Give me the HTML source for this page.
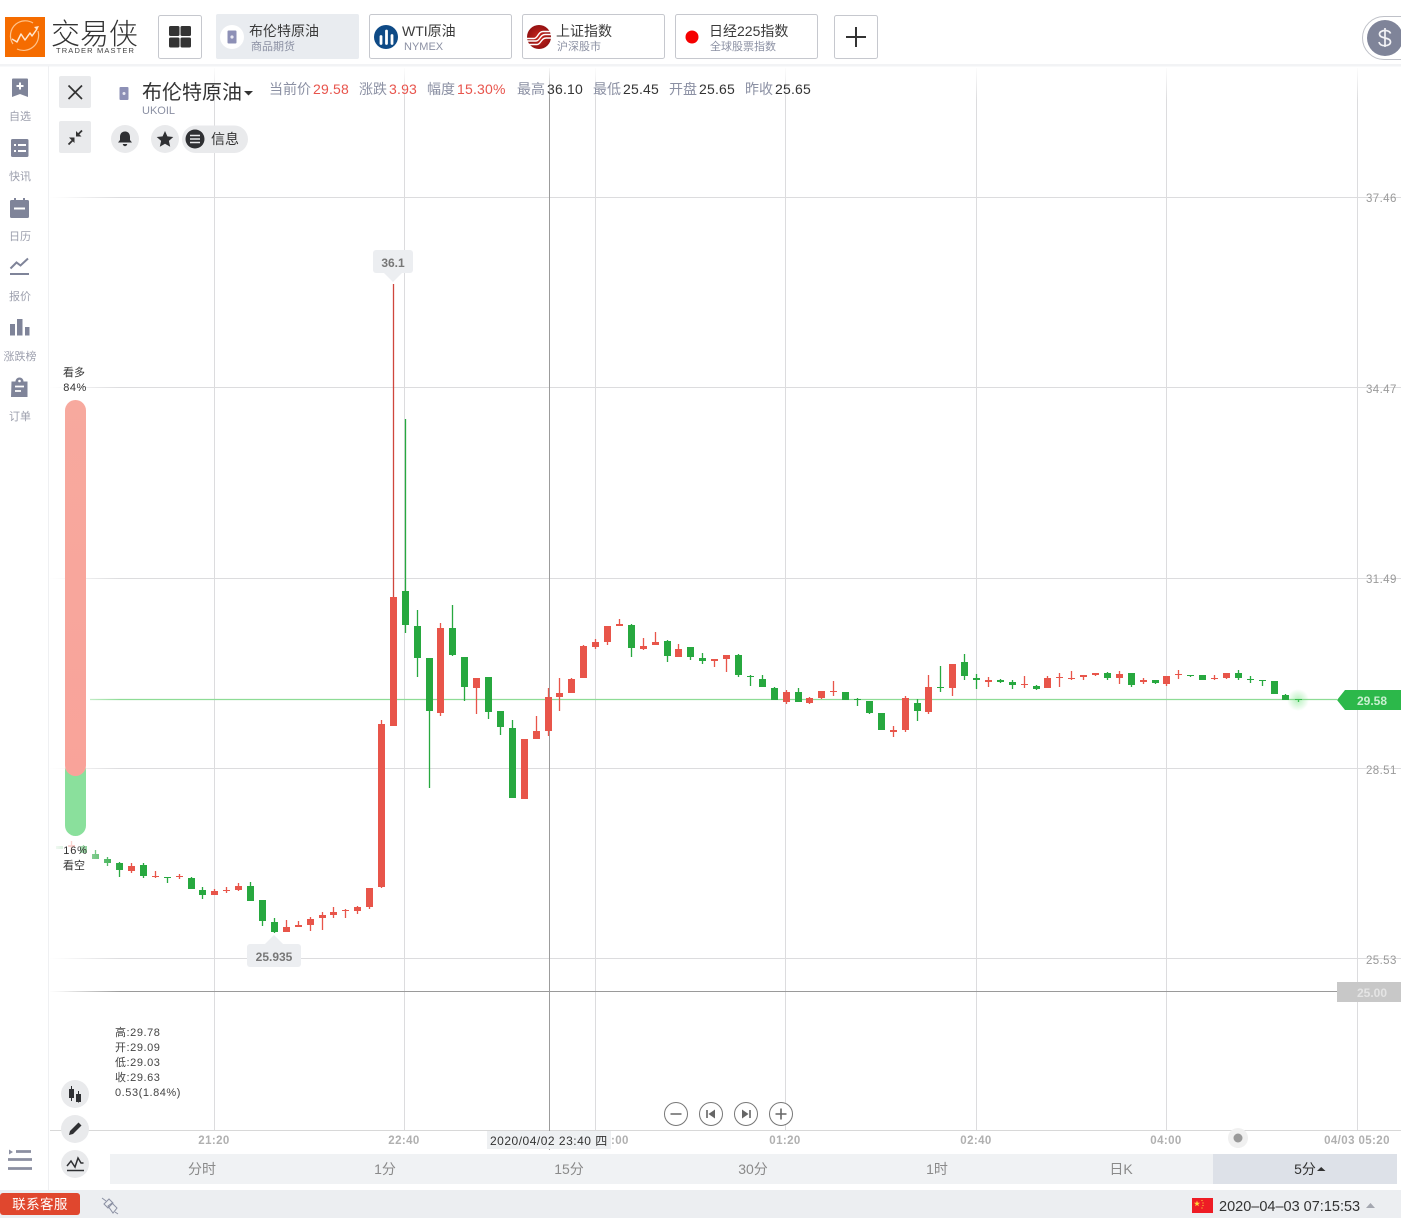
<!DOCTYPE html>
<html lang="zh"><head><meta charset="utf-8"><title>交易侠</title>
<style>
html,body{margin:0;padding:0;background:#fff}
body{width:1401px;height:1218px;position:relative;overflow:hidden;font-family:"Liberation Sans","Noto Sans CJK SC",sans-serif;color:#333}
svg.g{position:absolute;left:0;top:0}
.t{position:absolute;white-space:nowrap;line-height:16px}
.s{font-size:14px;top:81px;color:#8b90a3}
.r{font-size:14px;top:81px;color:#e8544c;letter-spacing:.2px}
.k{font-size:14px;top:81px;color:#333;letter-spacing:.2px}
.tt{font-size:14px;top:23px;color:#3a3a3a}
.st{font-size:11px;top:39px;color:#8b90a3}
.nav{font-size:11px;color:#9c9fad;width:40px;text-align:center;left:0}
.ax{font-size:11.5px;font-weight:bold;color:#b0b0b0;top:1133px;width:80px;text-align:center;letter-spacing:.4px}
.py{font-size:11.5px;color:#9a9a9a;left:1366px;letter-spacing:.4px}
.o{font-size:11px;color:#444;left:115px;letter-spacing:.55px}
.p{font-size:14px;color:#8a8a8a;top:1161px;width:60px;text-align:center}
</style></head><body>
<svg class="g" width="1401" height="1218" viewBox="0 0 1401 1218" xmlns="http://www.w3.org/2000/svg">
<defs>
<linearGradient id="fl" x1="0" x2="1" y1="0" y2="0"><stop offset="0" stop-color="#fff" stop-opacity="1"/><stop offset=".2" stop-color="#fff" stop-opacity=".85"/><stop offset="1" stop-color="#fff" stop-opacity="0"/></linearGradient>
<linearGradient id="ft" x1="0" x2="0" y1="0" y2="1"><stop offset="0" stop-color="#fff" stop-opacity="1"/><stop offset="1" stop-color="#fff" stop-opacity="0"/></linearGradient>
<linearGradient id="sr" x1="0" x2="0" y1="0" y2="1"><stop offset="0" stop-color="#f7a99e"/><stop offset="1" stop-color="#f9a39a"/></linearGradient>
<radialGradient id="gl"><stop offset="0" stop-color="#5fe06f" stop-opacity=".45"/><stop offset="1" stop-color="#5fe06f" stop-opacity="0"/></radialGradient>
<radialGradient id="sh" cx=".5" cy=".5" r=".55"><stop offset="0" stop-color="#c9281e"/><stop offset="1" stop-color="#8f0f10"/></radialGradient>
</defs>

<!-- grid -->
<path d="M50 197.500H1401M50 387.500H1401M50 578.500H1401M50 768.500H1401M50 958.500H1401" stroke="#dcdcde" stroke-width="1" fill="none"/>
<path d="M214.500 68V1130M404.500 68V1130M595.500 68V1130M785.500 68V1130M976.500 68V1130M1166.500 68V1130M1357.500 68V1130" stroke="#dcdcde" stroke-width="1" fill="none"/>
<path d="M50 1130.500H1401" stroke="#d8d8d8" fill="none"/>
<path d="M90 699.500H1337" stroke="#8edc96" stroke-width="1.200" fill="none"/>
<path d="M50 991.500H1337" stroke="#9a9a9a" fill="none"/>
<path d="M549.500 68V1150" stroke="#9c9c9c" fill="none"/>

<!-- candles: wicks -->
<path fill="none" stroke="#e8554a" stroke-width="1.300" d="M71.500 841V851M131.500 863V873M155.500 871V878M179.500 874V879M214.500 889V895M226.500 887V893M238.500 883V891M286.500 920V932M298.500 921V927M310.500 917V931M322.500 912V930M333.500 907V918M345.500 909V918M357.500 906V914M369.500 888V909M381.500 720V888M476.500 678V714M536.500 716V739M548.500 688V736M559.500 678V711M571.500 678V693M583.500 645V678M595.500 639V649M607.500 626V645M619.500 619V626M643.500 638V650M655.500 632V645M678.500 644V657M714.500 659V667M726.500 655V672M786.500 690V704M809.500 697V704M821.500 691V699M833.500 681V696M893.500 726V737M905.500 696V732M928.500 675V714M952.500 664V696M988.500 677V687M1024.500 676V688M1047.500 676V688M1059.500 673V687M1071.500 671V680M1083.500 675V680M1095.500 673V676M1119.500 671V684M1143.500 678V684M1166.500 676V686M1178.500 670V679M1214.500 675V680M1226.500 673V679M440.500 623V716"/>
<path d="M393.500 284V726" stroke="#cf463d" stroke-width="1.300" fill="none"/>
<path fill="none" stroke="#27a83f" stroke-width="1.300" d="M83.500 845V853M95.500 850V859M107.500 857V866M119.500 862V877M143.500 863V878M167.500 877V883M191.500 877V889M202.500 887V899M250.500 882V901M262.500 900V926M274.500 918V933M405.500 419V633M417.500 610V677M429.500 658V788M452.500 605V656M464.500 657V701M488.500 677V719M500.500 711V735M512.500 720V798M631.500 624V657M667.500 640V662M690.500 647V660M702.500 653V664M738.500 654V677M750.500 675V686M762.500 675V687M774.500 687V700M798.500 688V702M845.500 692V700M857.500 698V706M869.500 701V714M881.500 713V730M917.500 699V721M940.500 666V692M964.500 654V680M976.500 674V689M1000.500 679V683M1012.500 680V689M1036.500 685V690M1107.500 672V680M1131.500 673V687M1155.500 680V684M1190.500 675V677M1202.500 675V680M1238.500 670V680M1250.500 676V683M1262.500 680V686M1274.500 681V694M1285.500 694V700M1298.500 699V702"/>
<!-- candles: bodies -->
<path fill="none" stroke="#e8554a" stroke-width="7" d="M71.500 845V847M131.500 866V871M155.500 876V877M179.500 876V877M214.500 891V895M226.500 890V891M238.500 886V890M286.500 927V932M298.500 925V927M310.500 919V925M322.500 915V918M333.500 912V915M345.500 910V911M357.500 907V911M369.500 888V907M381.500 724V887M393.500 597V726M440.500 628V713M476.500 678V688M524.500 739V799M536.500 731V739M548.500 697V731M559.500 693V697M571.500 679V693M583.500 646V678M595.500 642V647M607.500 626V642M619.500 624V626M643.500 646V649M655.500 642V645M678.500 649V657M714.500 659V661M726.500 655V659M786.500 692V702M809.500 698V703M821.500 691V698M833.500 691V692M893.500 730V732M905.500 698V730M928.500 687V712M952.500 664V688M988.500 680V682M1024.500 684V685M1047.500 678V688M1059.500 677V678M1071.500 678V679M1083.500 675V677M1095.500 673V675M1119.500 674V678M1143.500 680V682M1166.500 676V684M1178.500 674V675M1214.500 678V679M1226.500 673V678"/>
<path fill="none" stroke="#27a83f" stroke-width="7" d="M59.500 846V849M83.500 846V853M95.500 854V859M107.500 859V863M119.500 863V870M143.500 865V876M167.500 877V878M191.500 878V889M202.500 890V895M250.500 886V901M262.500 900V921M274.500 922V932M405.500 591V625M417.500 626V658M429.500 658V711M452.500 628V655M464.500 657V687M488.500 677V712M500.500 711V727M512.500 728V798M631.500 625V648M667.500 641V656M690.500 647V657M702.500 658V661M738.500 655V675M750.500 676V677M762.500 679V687M774.500 688V700M798.500 692V702M845.500 692V700M857.500 699V700M869.500 701V713M881.500 713V730M917.500 703V711M940.500 687V688M964.500 662V676M976.500 678V680M1000.500 680V682M1012.500 682V685M1036.500 686V689M1107.500 673V678M1131.500 673V685M1155.500 680V683M1190.500 675V676M1202.500 675V680M1238.500 673V678M1250.500 679V680M1262.500 680V681M1274.500 681V694M1285.500 695V700M1298.500 699V700"/>
<circle cx="1298" cy="700" r="11" fill="url(#gl)"/>

<!-- fades -->
<rect x="49" y="66" width="72" height="1064" fill="url(#fl)"/>
<rect x="49" y="66" width="1352" height="34" fill="url(#ft)"/>

<!-- top bar -->
<rect x="0" y="64" width="1401" height="2.500" fill="#f2f3f5"/>
<rect x="48" y="66" width="1" height="1124" fill="#eff0f2"/>

<!-- logo -->
<rect x="5" y="17" width="40" height="40" fill="#f56c00"/>
<path d="M13 44a15 15 0 0 1 3-20a15 15 0 0 1 17-1" fill="none" stroke="#ffc38c" stroke-width="1.200"/>
<path d="M38 31a15 15 0 0 1-5 16a15 15 0 0 1-16 2" fill="none" stroke="#ffc38c" stroke-width="1.200"/>
<path d="M12 39l5 3l4-8l4 6l5-7l2 3l5-7" fill="none" stroke="#ffe6cf" stroke-width="1.500" stroke-linejoin="round"/>
<path d="M39 26l-5 1l3 3z" fill="#ffe6cf"/>

<!-- header buttons -->
<rect x="158.500" y="15.500" width="43" height="43" rx="2" fill="#fff" stroke="#c6c8ce"/>
<rect x="169" y="26" width="10.500" height="10" rx="1.500" fill="#333"/><rect x="180.500" y="26" width="10.500" height="10" rx="1.500" fill="#333"/>
<rect x="169" y="37.500" width="10.500" height="10" rx="1.500" fill="#333"/><rect x="180.500" y="37.500" width="10.500" height="10" rx="1.500" fill="#333"/>
<rect x="216" y="14" width="143" height="45" rx="2" fill="#e9ecf0"/>
<circle cx="232" cy="37" r="12" fill="#fff"/>
<rect x="227.500" y="30.500" width="9" height="13" rx="1" fill="#8d90b6"/>
<circle cx="232" cy="37" r="1.600" fill="#e8e8f2"/>
<rect x="369.500" y="14.500" width="142" height="44" rx="2" fill="#fff" stroke="#c6c8ce"/>
<circle cx="386" cy="37" r="12" fill="#0e4a86"/>
<path d="M381 36.500v7M386.500 31v12.500M392 35.500v8" stroke="#fff" stroke-width="2.800" stroke-linecap="round" fill="none"/>
<rect x="522.500" y="14.500" width="142" height="44" rx="2" fill="#fff" stroke="#c6c8ce"/>
<circle cx="539" cy="37" r="12" fill="url(#sh)"/>
<path d="M527 38.500h7c4 0 4-7 9-7h7M527 41h9c4 0 4-6.500 9-6.500h6M529 44.500h8c4 0 4-6.500 9-6.500h5" stroke="#fff" stroke-width="1.400" fill="none"/>
<rect x="675.500" y="14.500" width="142" height="44" rx="2" fill="#fff" stroke="#c6c8ce"/>
<circle cx="692" cy="37" r="6.500" fill="#f50000"/>
<rect x="834.500" y="15.500" width="43" height="43" rx="2" fill="#fff" stroke="#c6c8ce"/>
<path d="M846 37h20M856 27v20" stroke="#333" stroke-width="2" fill="none"/>

<!-- $ -->
<path d="M1401 16.500h-17a21.500 21.500 0 0 0 0 43h17" fill="#fff" stroke="#bfc1c8"/>
<circle cx="1385" cy="38" r="18" fill="#7f8499"/>
<path d="M1390.500 33.500c-.5-2-3-3-5.500-3c-3 0-5.500 1.500-5.500 3.500c0 5.500 11 2.500 11 8c0 2.300-2.500 3.700-5.500 3.700c-3 0-5.500-1.200-6-3.700M1385 28v19" fill="none" stroke="#f3f3f6" stroke-width="1.700"/>

<!-- sidebar icons -->
<path d="M12 79.500a1 1 0 0 1 1-1h14a1 1 0 0 1 1 1v17.500l-8-3l-8 3z" fill="#7f8499"/>
<path d="M20 82.500v7M16.500 86h7" stroke="#fff" stroke-width="2" fill="none"/>
<rect x="11" y="139" width="17.500" height="18" rx="1.500" fill="#7f8499"/>
<path d="M14 145h2M18 145h8M14 151h2M18 151h8" stroke="#fff" stroke-width="2" fill="none"/>
<path d="M10 201.500a1.500 1.500 0 0 1 1.500-1.500h2.500v-2h2v2h7v-2h2v2h2.500a1.500 1.500 0 0 1 1.500 1.500v15a1.500 1.500 0 0 1-1.500 1.500h-16a1.500 1.500 0 0 1-1.500-1.500z" fill="#7f8499"/>
<path d="M14 208.500h11" stroke="#fff" stroke-width="2" fill="none"/>
<path d="M10.500 268.500l6-6l4 3l7.500-7" fill="none" stroke="#7f8499" stroke-width="2"/>
<path d="M10 274h19" stroke="#7f8499" stroke-width="2" fill="none"/>
<path d="M10 324h5v11.500h-5zM17 319h5.500v16.500h-5.500zM25 327h4.500v8.500h-4.500z" fill="#7f8499"/>
<path d="M12 381.500h4a4 4 0 0 1 8 0h4v15.500h-16.500z" fill="#7f8499" transform="translate(-.5 0)"/>
<path d="M15 386.500h9M15 391h6" stroke="#fff" stroke-width="1.800" fill="none"/>
<circle cx="19.500" cy="381" r="1.300" fill="#fff"/>
<path d="M16 1151.500h15M8 1159.500h24M8 1168.500h24" stroke="#8b8fa1" stroke-width="2.800" fill="none"/>
<path d="M9 1149.500v5l4-2.500z" fill="#8b8fa1"/>

<!-- close & collapse -->
<rect x="59" y="76" width="32" height="32" rx="2" fill="#e9eaec"/>
<path d="M68.500 85.500l13.500 13.500M82 85.500l-13.500 13.500" stroke="#333" stroke-width="1.700" fill="none"/>
<rect x="59" y="121" width="32" height="32" rx="2" fill="#e9eaec"/>
<path d="M68.500 144.500l4-4M82 130.500l-4 4" stroke="#333" stroke-width="1.800" fill="none"/>
<path d="M74.500 137.500v5.500l-5.500-5.500zM76 136.500v-5.500l5.500 5.500z" fill="#333"/>
<circle cx="125" cy="139" r="14" fill="#e9eaec"/>
<path d="M125 131.500c-3.500 0-5 2.500-5 5.500v3l-2 2.500h14l-2-2.500v-3c0-3-1.500-5.500-5-5.500zM122.800 144h4.400a2.200 2.200 0 0 1-4.400 0z" fill="#2f3033"/>
<circle cx="165" cy="139" r="14" fill="#e9eaec"/>
<path d="M165 131l2.400 5.400l5.900.6l-4.400 3.900l1.300 5.800l-5.200-3l-5.200 3l1.300-5.800l-4.400-3.900l5.900-.6z" fill="#2f3033"/>
<rect x="182" y="125.500" width="66" height="27.500" rx="13.700" fill="#e9eaec"/>
<circle cx="195" cy="139" r="9.500" fill="#2f3033"/>
<path d="M190 135.500h10M190 139h10M190 142.500h10" stroke="#e9eaec" stroke-width="1.600" fill="none"/>
<rect x="119.500" y="87" width="9" height="13" rx="1" fill="#8d90b6"/>
<circle cx="124" cy="93.500" r="1.500" fill="#e8e8f2"/>
<path d="M244 91h9l-4.500 4.500z" fill="#333"/>

<!-- sentiment -->
<rect x="65" y="760" width="21" height="76" rx="10.500" fill="#8ae09c"/>
<rect x="65" y="400" width="21" height="376" rx="10.500" fill="url(#sr)"/>

<!-- tooltips -->
<rect x="373" y="250" width="40" height="23" rx="3" fill="#eceef1"/>
<path d="M384 273h18l-9 9z" fill="#eceef1"/>
<rect x="247" y="944" width="54" height="23" rx="3" fill="#eceef1"/>
<path d="M265 944h18l-9-9z" fill="#eceef1"/>

<!-- price tags -->
<path d="M1337 700l8-10h56v20h-56z" fill="#2cb84a"/>
<rect x="1337" y="982" width="64" height="20" fill="#c8c8c8"/>

<!-- bottom-left tools -->
<circle cx="75" cy="1094" r="14" fill="#e9eaec"/>
<path d="M69 1089h5v9h-5zM76 1094h5v8h-5z" fill="#2f3033"/>
<path d="M71.500 1086v15M78.500 1091v11.500" stroke="#2f3033" fill="none"/>
<circle cx="75" cy="1129" r="14" fill="#e9eaec"/>
<path d="M69 1135l1-4l8.500-8.500l3 3l-8.500 8.500z" fill="#2f3033"/>
<circle cx="75" cy="1164" r="14" fill="#e9eaec"/>
<path d="M67 1166l4-5l4 6l3-9l3 5h2.500M67 1170.500h17" fill="none" stroke="#2f3033" stroke-width="1.500"/>

<!-- zoom controls -->
<g fill="#fff" stroke="#777" stroke-width="1">
<circle cx="676" cy="1114" r="11.500"/><circle cx="711" cy="1114" r="11.500"/><circle cx="746" cy="1114" r="11.500"/><circle cx="781" cy="1114" r="11.500"/>
</g>
<path d="M670.500 1114h11M775.500 1114h11M781 1108.500v11" stroke="#666" stroke-width="1.600" fill="none"/>
<path d="M707 1110v8" stroke="#666" stroke-width="1.600" fill="none"/><path d="M715 1109.500v9l-6.500-4.500z" fill="#666"/>
<path d="M750 1110v8" stroke="#666" stroke-width="1.600" fill="none"/><path d="M742 1109.500v9l6.500-4.500z" fill="#666"/>

<rect x="487" y="1131" width="124" height="18" fill="#eef0f2"/>
<circle cx="1238" cy="1138" r="10" fill="#f0f0f0"/><circle cx="1238" cy="1138" r="4.500" fill="#9a9a9a"/>

<!-- period bar -->
<rect x="110" y="1154" width="1287" height="30" fill="#f0f2f4"/>
<rect x="1213" y="1154" width="184" height="30" fill="#dde1e8"/>
<path d="M1317 1171h8.500l-4.300-4z" fill="#333"/>

<!-- status bar -->
<rect x="0" y="1190" width="1401" height="28" fill="#eceef1"/>
<rect x="0" y="1193" width="80" height="22" rx="3" fill="#e0472e"/>
<g fill="none" stroke="#8b90a3" stroke-width="1"><path d="M104 1204l5-5l4 4l-5 5zM108 1206l4-3l5 5l-4 5zM102 1198l4 3M115 1212l3 2"/></g>
<rect x="1192" y="1198" width="21" height="15" fill="#ee1c25"/>
<path d="M1197 1200.500l.8 2.200h2.300l-1.900 1.400l.7 2.200l-1.900-1.300l-1.900 1.300l.7-2.200l-1.900-1.400h2.300z" fill="#ffd83a"/>
<circle cx="1202" cy="1200.500" r=".6" fill="#ffd83a"/><circle cx="1203" cy="1203" r=".6" fill="#ffd83a"/><circle cx="1203" cy="1205.500" r=".6" fill="#ffd83a"/><circle cx="1202" cy="1208" r=".6" fill="#ffd83a"/>
<path d="M1366 1208h9l-4.500-5z" fill="#a4a7b0"/>
</svg>

<!-- logo text -->
<span class="t" style="left:51px;top:18px;font-size:29px;line-height:34px;color:#333;font-weight:300">交易侠</span>
<span class="t" style="left:56px;top:43px;font-size:7.500px;letter-spacing:1.150px;color:#444">TRADER MASTER</span>

<!-- tabs -->
<span class="t tt" style="left:249px">布伦特原油</span><span class="t st" style="left:251px">商品期货</span>
<span class="t tt" style="left:402px">WTI原油</span><span class="t st" style="left:404px">NYMEX</span>
<span class="t tt" style="left:556px">上证指数</span><span class="t st" style="left:557px">沪深股市</span>
<span class="t tt" style="left:709px">日经225指数</span><span class="t st" style="left:710px">全球股票指数</span>

<!-- title & stats -->
<span class="t" style="left:142px;top:81px;font-size:20px;line-height:24px;color:#333">布伦特原油</span>
<span class="t" style="left:142px;top:103px;font-size:11px;color:#8b90a3">UKOIL</span>
<span class="t s" style="left:269px">当前价</span><span class="t r" style="left:313px">29.58</span>
<span class="t s" style="left:359px">涨跌</span><span class="t r" style="left:389px">3.93</span>
<span class="t s" style="left:427px">幅度</span><span class="t r" style="left:457px">15.30%</span>
<span class="t s" style="left:517px">最高</span><span class="t k" style="left:547px">36.10</span>
<span class="t s" style="left:593px">最低</span><span class="t k" style="left:623px">25.45</span>
<span class="t s" style="left:669px">开盘</span><span class="t k" style="left:699px">25.65</span>
<span class="t s" style="left:745px">昨收</span><span class="t k" style="left:775px">25.65</span>
<span class="t" style="left:211px;top:131px;font-size:14px;color:#333">信息</span>

<!-- sidebar -->
<span class="t nav" style="top:109px">自选</span>
<span class="t nav" style="top:169px">快讯</span>
<span class="t nav" style="top:229px">日历</span>
<span class="t nav" style="top:289px">报价</span>
<span class="t nav" style="top:349px">涨跌榜</span>
<span class="t nav" style="top:409px">订单</span>

<!-- sentiment -->
<span class="t" style="left:54px;width:40px;text-align:center;top:365px;font-size:11px;color:#333">看多</span>
<span class="t" style="left:55px;width:40px;text-align:center;top:380px;font-size:11px;color:#333;letter-spacing:.5px">84%</span>
<span class="t" style="left:55px;width:41px;text-align:center;top:843px;font-size:11px;color:#333;letter-spacing:.8px">16%</span>
<span class="t" style="left:54px;width:40px;text-align:center;top:858px;font-size:11px;color:#333">看空</span>

<!-- tooltips -->
<span class="t" style="left:373px;width:40px;text-align:center;top:255px;font-size:12px;font-weight:bold;color:#777">36.1</span>
<span class="t" style="left:247px;width:54px;text-align:center;top:949px;font-size:12px;font-weight:bold;color:#777">25.935</span>

<!-- y axis -->
<span class="t py" style="top:191px">37.46</span>
<span class="t py" style="top:382px">34.47</span>
<span class="t py" style="top:572px">31.49</span>
<span class="t py" style="top:763px">28.51</span>
<span class="t py" style="top:953px">25.53</span>
<span class="t" style="left:1337px;width:70px;text-align:center;top:693px;font-size:12px;font-weight:bold;color:#c9f0d0">29.58</span>
<span class="t" style="left:1337px;width:70px;text-align:center;top:985px;font-size:12px;font-weight:bold;color:#e4e4e4">25.00</span>

<!-- OHLC -->
<span class="t o" style="top:1025px">高:29.78</span>
<span class="t o" style="top:1040px">开:29.09</span>
<span class="t o" style="top:1055px">低:29.03</span>
<span class="t o" style="top:1070px">收:29.63</span>
<span class="t o" style="top:1085px">0.53(1.84%)</span>

<!-- x axis -->
<span class="t ax" style="left:174px">21:20</span>
<span class="t ax" style="left:364px">22:40</span>
<span class="t ax" style="left:611px;width:22px;text-align:left">:00</span>
<span class="t ax" style="left:745px">01:20</span>
<span class="t ax" style="left:936px">02:40</span>
<span class="t ax" style="left:1126px">04:00</span>
<span class="t ax" style="left:1317px">04/03 05:20</span>
<span class="t" style="left:490px;top:1133px;font-size:12px;color:#333;letter-spacing:.5px">2020/04/02 23:40 四</span>

<!-- period -->
<span class="t p" style="left:172px">分时</span>
<span class="t p" style="left:355px">1分</span>
<span class="t p" style="left:539px">15分</span>
<span class="t p" style="left:723px">30分</span>
<span class="t p" style="left:907px">1时</span>
<span class="t p" style="left:1091px">日K</span>
<span class="t p" style="left:1275px;color:#333">5分</span>

<!-- status -->
<span class="t" style="left:0;width:80px;text-align:center;top:1197px;font-size:13.500px;color:#fff;letter-spacing:.4px">联系客服</span>
<span class="t" style="left:1219px;top:1199px;font-size:14.500px;color:#333">2020–04–03 07:15:53</span>
</body></html>
